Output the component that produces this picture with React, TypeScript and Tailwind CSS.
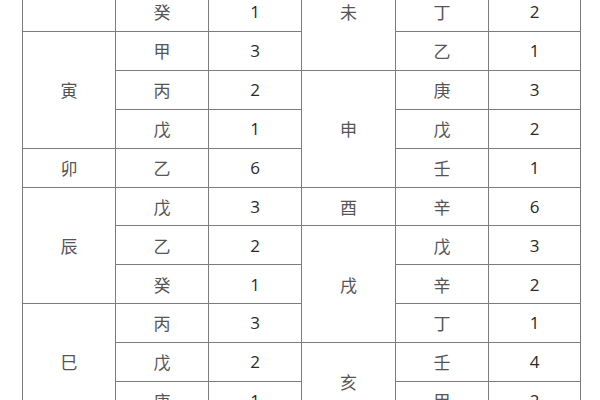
type Group = { branch: string; stems: [string, string][] };

// the first three rows sit above the visible area; they only keep the row spans right
const left: Group[] = [
  { branch: "", stems: [["", ""]] },
  { branch: "", stems: [["", ""], ["", ""], ["癸", "1"]] },
  { branch: "寅", stems: [["甲", "3"], ["丙", "2"], ["戊", "1"]] },
  { branch: "卯", stems: [["乙", "6"]] },
  { branch: "辰", stems: [["戊", "3"], ["乙", "2"], ["癸", "1"]] },
  { branch: "巳", stems: [["丙", "3"], ["戊", "2"], ["庚", "1"]] },
];

const right: Group[] = [
  { branch: "", stems: [["", ""], ["", ""]] },
  { branch: "未", stems: [["", ""], ["丁", "2"], ["乙", "1"]] },
  { branch: "申", stems: [["庚", "3"], ["戊", "2"], ["壬", "1"]] },
  { branch: "酉", stems: [["辛", "6"]] },
  { branch: "戌", stems: [["戊", "3"], ["辛", "2"], ["丁", "1"]] },
  { branch: "亥", stems: [["壬", "4"], ["甲", "2"]] },
];

type Cell = { first: boolean; branch: string; span: number; stem: string; n: string };

function flatten(groups: Group[]): Cell[] {
  const out: Cell[] = [];
  groups.forEach((g) =>
    g.stems.forEach(([stem, n], i) =>
      out.push({ first: i === 0, branch: g.branch, span: g.stems.length, stem, n })
    )
  );
  return out;
}

const cjk = "font-['Noto_Sans_CJK_SC',sans-serif] text-[17px] text-[#555]";
const num = "font-['Open_Sans',sans-serif] text-[17px] text-[#2a2a2a]";
const td = "border border-[#7c7c7c] text-center align-middle p-0";

export default function App() {
  const l = flatten(left);
  const r = flatten(right);

  return (
    <div className="h-[400px] w-[600px] overflow-hidden bg-white">
      <table className="ml-[22px] mt-[-124.6px] w-[558px] table-fixed border-collapse">
        <colgroup>
          <col className="w-[93px]" />
          <col className="w-[93px]" />
          <col className="w-[93px]" />
          <col className="w-[94px]" />
          <col className="w-[93px]" />
          <col className="w-[92px]" />
        </colgroup>
        <tbody>
          {l.map((a, i) => {
            const b = r[i];
            return (
              <tr key={i} className="h-[38.9px]">
                {a.first && (
                  <td rowSpan={a.span} className={`${td} ${cjk}`}>
                    {a.branch}
                  </td>
                )}
                <td className={`${td} ${cjk}`}>{a.stem}</td>
                <td className={`${td} ${num}`}>{a.n}</td>
                {b.first && (
                  <td rowSpan={b.span} className={`${td} ${cjk}`}>
                    {b.branch}
                  </td>
                )}
                <td className={`${td} ${cjk}`}>{b.stem}</td>
                <td className={`${td} ${num}`}>{b.n}</td>
              </tr>
            );
          })}
        </tbody>
      </table>
    </div>
  );
}
